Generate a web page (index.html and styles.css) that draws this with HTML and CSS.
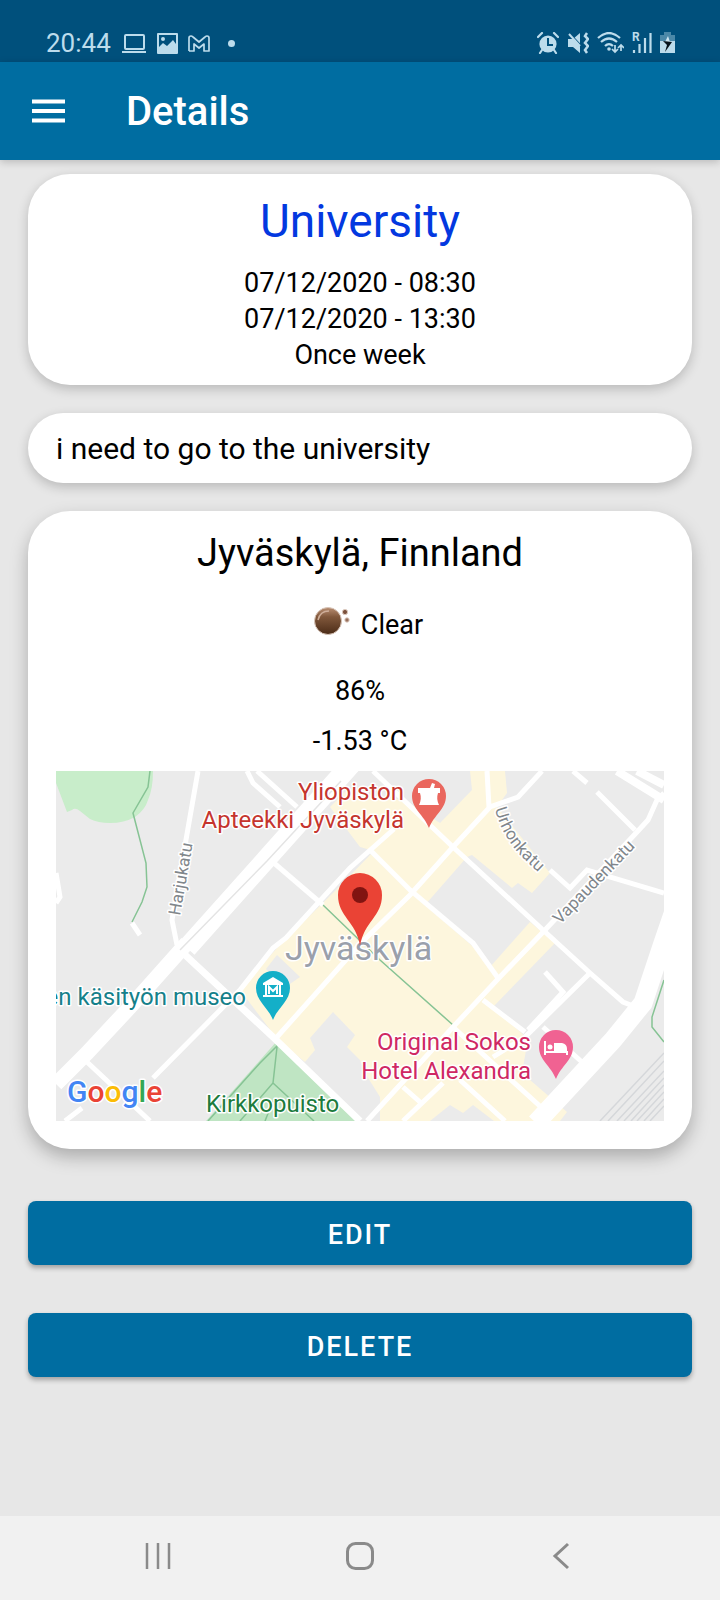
FILE: index.html
```html
<!DOCTYPE html>
<html lang="en">
<head>
<meta charset="utf-8">
<meta name="viewport" content="width=device-width, initial-scale=1">
<title>Details</title>
<link rel="stylesheet" href="styles.css">
</head>
<body>
<div class="screen">
  <div class="status-bar">
    <div class="status-group status-left">
      <span class="clock">20:44</span>
      <svg width="26" height="22" viewBox="0 0 26 22" fill="none" stroke="currentColor" stroke-width="2"><rect x="4" y="3" width="19" height="14" rx="1"/><path d="M1 20h24"/></svg>
      <svg width="21" height="21" viewBox="0 0 21 21"><path fill="currentColor" fill-rule="evenodd" d="M1 0h19q1 0 1 1v19q0 1-1 1H1q-1 0-1-1V1q0-1 1-1zM2 2v12l4-4 4 3 6-6 3 4V2zM6 4a2 2 0 1 1 0 4 2 2 0 0 1 0-4z"/></svg>
      <svg width="22" height="17" viewBox="0 0 22 17" fill="none" stroke="currentColor" stroke-width="1.7" stroke-linejoin="round"><path d="M1 16V3q0-2 2-2 1 0 2 1l6 5 6-5q1-1 2-1 2 0 2 2v13h-5V9l-5 4-5-4v7H1"/></svg>
      <span class="dot"></span>
    </div>
    <div class="status-group">
      <svg width="22" height="22" viewBox="0 0 22 22"><circle cx="11" cy="12" r="8.6" fill="currentColor"/><path d="M1 5l4-4M21 5l-4-4M5 18l-2 3M17 18l2 3" stroke="currentColor" stroke-width="2.2" stroke-linecap="round"/><path d="M11 6v7h5" fill="none" stroke="#00507c" stroke-width="2"/></svg>
      <svg width="22" height="22" viewBox="0 0 22 22"><path fill="currentColor" d="M1 7h5l7-6v20l-7-6H1z"/><path d="M1 0l14 15" stroke="#00507c" stroke-width="2"/><path d="M2 2l11 12" stroke="currentColor" stroke-width="2"/><path d="M20 1l-2 3 3 3-3 4 3 3-3 4 2 3" fill="none" stroke="currentColor" stroke-width="2.5"/></svg>
      <svg width="27" height="22" viewBox="0 0 27 22" fill="none" stroke="currentColor" stroke-width="2.2"><path d="M1 6q11-10 22 0M4 10q8-7 16 0M8 14q4-4 8 0"/><circle cx="12" cy="17" r="1.8" fill="currentColor" stroke="none"/><path stroke-width="1.7" d="M18 13v7m-3-3l3 3 3-3M24 19v-6m-3 3l3-3 3 3"/></svg>
      <svg class="signal" width="20" height="22" viewBox="0 0 20 22"><text class="roam" x="0" y="9">R</text><path d="M2 18v3M7.500 12v9M13 6v15M18.500 1v20" stroke="currentColor" stroke-width="2.200"/></svg>
      <svg width="15" height="22" viewBox="0 0 15 22"><path fill="currentColor" opacity=".4" d="M4 0h7v3h4v7H0V3h4z"/><path fill="currentColor" d="M0 9h15v12H0z"/><path fill="#cfe6f2" d="M8 4L5 10h5z"/><path fill="#06131c" d="M3 9l9 1-7 10 2-7z"/></svg>
    </div>
  </div>

  <header class="app-bar">
    <button class="menu-button" type="button" aria-label="Open menu"><svg width="33" height="24" viewBox="0 0 33 24"><path d="M0 2.500h33M0 12h33M0 21.500h33" stroke="currentColor" stroke-width="4"/></svg></button>
    <h1 class="app-title">Details</h1>
  </header>

  <main class="content">
    <section class="card event">
      <h2 class="event-title">University</h2>
      <p class="line">07/12/2020 - 08:30</p>
      <p class="line">07/12/2020 - 13:30</p>
      <p class="line">Once week</p>
    </section>

    <section class="card note"><p class="note-text">i need to go to the university</p></section>

    <section class="card place">
      <h2 class="place-title">Jyväskylä, Finnland</h2>
      <div class="weather">
        <svg width="64" height="36" viewBox="0 0 64 36" aria-hidden="true">
          <defs><linearGradient id="moon" x1="0" y1="0" x2="0" y2="1"><stop offset="0" stop-color="#b98e72"/><stop offset=".35" stop-color="#80573b"/><stop offset="1" stop-color="#4b2c17"/></linearGradient></defs>
          <circle cx="31" cy="14" r="13.500" fill="url(#moon)" stroke="#d8c5b9"/>
          <path d="M21 13q2-9 11-9" fill="none" stroke="#cfae9a" stroke-width="1.500"/>
          <circle cx="48" cy="5" r="2.600" fill="#7b513c" stroke="#dccabf"/><circle cx="50" cy="13" r="2.200" fill="#98705c" stroke="#dccabf"/>
        </svg>
        <span class="line">Clear</span>
      </div>
      <p class="line humidity">86%</p>
      <p class="line temperature">-1.53 °C</p>
      <svg class="map" viewBox="0 0 608 350" role="img" aria-label="Map of Jyväskylä">
        <rect width="608" height="350" fill="#ebebeb"/>
        <path fill="#c8edca" d="M0 0H97Q97 18 92 29 89 39 79 46 68 52 54 52 42 52 34 48L24 40Q19 36 16 39L11 41 0 12z"/>
        <path fill="#fdf6dd" d="M274 36L290 20 340 28 350 30 384 52 416 19 414 0H449L451 22 441 36 494 102 476 122 462 112 456 117 416 84 411 86 369 134 422 180 434 196 474 151 499 172 437 236 472 268 466 302 511 341 504 350H438L417 334 407 342 394 334 374 350H324L324 326 309 302 304 289 291 276 299 264 277 241 254 267 259 279 249 291 222 269 184 219 221 177 277 122 318 80 304 76z"/>
        <path fill="#ebebeb" d="M221 184L244 206 228 217 210 198z"/>
        <path fill="#bfe5c3" d="M221 270L150 350H303z"/>
        <path class="trail" d="M94 0L92 16 77 42 90 92 91 116 86 131 76 151M267 134L324 189 397 254M608 209L596 246V256L608 271"/>
        <path class="trail" d="M223 273L204 292 152 350M221 276L217 312 184 350M217 312L258 350M217 330L209 350"/>
        <g class="rail"><path d="M608 282L544 350M608 290L552 350M608 300L561 350M608 307L568 350M608 314L575 350M608 321L581 350M608 328L588 350M608 335L594 350"/></g>
        <g class="road">
          <path d="M317 0L397 76 487 159 534 202 567 231 585 238"/>
          <path d="M486 0L462 26 434 36 397 76 354 124 305 172 221 266 M184 219L97 307M431 0L433 36"/>
          <path d="M338 58L294 97 230 167 217 177 184 219"/>
          <path d="M211 86L267 134M314 79L354 119 417 172 442 207"/>
          <path d="M608 22L601 29 592 49 581 61 489 159 441 209 397 256 311 350M541 21L579 59M517 0L531 12"/>
          <path d="M494 99L514 117 531 99 608 122M427 229L469 261M534 202L469 266 437 286M489 201L507 221 472 259M487 256L527 292"/>
          <path d="M397 256L486 337M404 309L449 350M387 312L347 350M347 316L364 331"/>
          <path d="M31 291L94 350M9 350L26 337M142 0L116 149 121 174M191 0L197 12 224 36M201 0L241 36M0 102L4 126 0 132M76 152L84 164"/>
        </g>
        <path class="road" stroke-width="7" d="M127 182L217 266 304 350"/>
        <path class="road" stroke-width="8" d="M561 0L608 29M581 0L608 14"/>
        <path class="road" stroke-width="20" d="M298 -10L214 84 131 177"/>
        <path class="road" stroke-width="15" d="M131 172L74 236 31 282 0 313"/>
        <path d="M285 10L211 90 124 179" fill="none" stroke="#e4e4e4" stroke-width="1.500"/>
        <path class="road" stroke-width="19" d="M625 120L608 169 587 232 557 269 480 352"/>

        <text class="label street" transform="translate(124 145) rotate(-80)">Harjukatu</text>
        <path id="urhonkatu" d="M439 38Q446 66 468 88L502 120" fill="none"/>
        <text class="label street"><textPath href="#urhonkatu">Urhonkatu</textPath></text>
        <text class="label street" transform="translate(504 154) rotate(-46)">Vapaudenkatu</text>
        <text class="label city" x="229" y="189">Jyväskylä</text>
        <g class="label pharmacy end"><text x="348" y="29">Yliopiston</text><text x="348" y="57">Apteekki Jyväskylä</text></g>
        <text class="label museum end" x="190" y="234">en käsityön museo</text>
        <g class="label hotel end"><text x="475" y="279">Original Sokos</text><text x="475" y="308">Hotel Alexandra</text></g>
        <text class="label park" x="150" y="341">Kirkkopuisto</text>
        <text class="label google" x="11" y="331"><tspan fill="#4285f4">G</tspan><tspan fill="#ea4335">o</tspan><tspan fill="#fbbc05">o</tspan><tspan fill="#4285f4">g</tspan><tspan fill="#34a853">l</tspan><tspan fill="#ea4335">e</tspan></text>

        <defs><path id="poi" d="M0 1C-5-12-17-18-17-31A17 17 0 0 1 17-31C17-18 5-12 0 1z"/></defs>
        <g transform="translate(373 56)"><use href="#poi" fill="#ea675e"/><path fill="#fff" d="M-11-39H1L3-44 6-43 5-39H11V-34H9Q7-28 10-22H-10Q-7-28-9-34H-11z"/></g>
        <g transform="translate(217 248)"><use href="#poi" fill="#14afc8"/><path fill="#fff" d="M0-42L10-36V-34H-10V-36zM-8-34H-6V-24H-8zM6-34H8V-24H6zM-10-24H10V-22H-10z"/><path d="M-4-25V-32L0-28 4-32V-25" fill="none" stroke="#fff" stroke-width="2"/></g>
        <g transform="translate(500 307)"><use href="#poi" fill="#f06292"/><path d="M-11-37V-23M-11-26H11V-23" fill="none" stroke="#fff" stroke-width="2"/><circle cx="-6" cy="-31" r="2.500" fill="#fff"/><path fill="#fff" d="M-2-35H6Q11-34 11-29V-26H-2z"/></g>
        <path fill="#ea4335" d="M304 175C300 150 282 146 282 124A22 22 0 0 1 326 124C326 146 308 150 304 175z"/>
        <circle cx="304" cy="124" r="8" fill="#811411"/>
      </svg>
    </section>

    <div class="actions">
      <button class="action" type="button">EDIT</button>
      <button class="action" type="button">DELETE</button>
    </div>
  </main>

  <nav class="system-nav" aria-label="System">
    <button type="button" aria-label="Recent apps"><svg width="28" height="28" viewBox="0 0 28 28"><path d="M3 1v26M14 1v26M25 1v26" stroke="currentColor" stroke-width="2.500"/></svg></button>
    <button type="button" aria-label="Home"><svg width="28" height="28" viewBox="0 0 28 28"><rect x="1.500" y="1.500" width="25" height="25" rx="8" fill="none" stroke="currentColor" stroke-width="3"/></svg></button>
    <button type="button" aria-label="Back"><svg width="28" height="28" viewBox="0 0 28 28"><path d="M20 2L7 14l13 12" fill="none" stroke="currentColor" stroke-width="3"/></svg></button>
  </nav>
</div>
</body>
</html>
```
FILE: styles.css
```css
* { box-sizing: border-box; }

body {
  margin: 0;
  background: #e7e7e7;
  color: #000;
  font-family: Roboto, "Liberation Sans", sans-serif;
}

h1, h2, p { margin: 0; font-weight: 400; }
button { border: 0; padding: 0; font-family: inherit; color: inherit; background: none; }
svg { display: block; flex: none; }

.screen { min-height: 100vh; display: flex; flex-direction: column; }

.status-bar {
  display: flex;
  justify-content: space-between;
  padding: 28px 45px 4px 46px;
  background: #00507c;
  color: #bcdcec;
}
.status-group { display: flex; align-items: center; gap: 8px; }
.status-left { gap: 10px; }
.clock { font-size: 26px; line-height: 30px; }
.dot { width: 7px; height: 7px; margin-left: 8px; border-radius: 50%; background: currentColor; }
.signal { overflow: visible; }
.roam { font-size: 12px; font-weight: 700; fill: currentColor; }

.app-bar {
  display: flex;
  align-items: center;
  gap: 61px;
  padding: 25px 32px;
  background: #006da1;
  color: #fff;
  box-shadow: 0 2px 8px rgba(0, 0, 0, .2);
}
.app-title { padding-top: 2px; font-size: 40px; line-height: 46px; font-weight: 500; }

.content { flex: 1; padding: 14px 28px 28px; }

.card {
  margin-bottom: 28px;
  border-radius: 42px;
  background: #fff;
  text-align: center;
  box-shadow: 0 4px 12px rgba(0, 0, 0, .2);
}
.line { font-size: 27px; line-height: 36px; }

.event { padding: 19px 28px 12px; }
.event-title { margin-bottom: 16px; font-size: 46px; line-height: 56px; color: #0338e0; }

.note { padding: 19px 28px 17px; border-radius: 35px; text-align: left; }
.note-text { font-size: 30px; line-height: 34px; }

.place { padding: 19px 28px 28px; box-shadow: 0 8px 18px rgba(0, 0, 0, .26); }
.place-title { font-size: 38px; line-height: 46px; }
.weather { display: flex; justify-content: center; margin: 31px 0 30px; }
.temperature { margin: 14px 0 12px; }

.map { width: 100%; height: auto; }
.road { fill: none; stroke: #fff; }
.trail { fill: none; stroke: #86c394; stroke-width: 1.5; }
.rail { fill: none; stroke: #d5d7da; stroke-width: 1.5; }
g.road { stroke-width: 5; }
.label { font-size: 24px; stroke: #fff; stroke-width: 3px; stroke-linejoin: round; paint-order: stroke; }
.end { text-anchor: end; }
.street { font-size: 17px; fill: #80868b; }
.city { font-size: 34px; fill: #9aa0ab; }
.pharmacy { fill: #c5352e; }
.museum { fill: #15808a; }
.hotel { fill: #cf2863; }
.park { fill: #1c7b3d; }
.google { font-size: 30px; font-weight: 500; }

.actions { display: grid; gap: 48px; margin-top: 52px; }
.action {
  padding: 18px 16px 14px;
  border-radius: 8px;
  background: #006da1;
  color: #fff;
  font-size: 27px;
  line-height: 32px;
  font-weight: 500;
  letter-spacing: 2px;
  box-shadow: 0 3px 5px rgba(0, 0, 0, .3);
}

.system-nav {
  display: grid;
  grid-template-columns: repeat(3, 1fr);
  padding: 0 57px;
  background: #f1f1f1;
  color: #8a8a8a;
}
.system-nav button { display: grid; place-items: center; padding: 26px 0 30px; }
```
